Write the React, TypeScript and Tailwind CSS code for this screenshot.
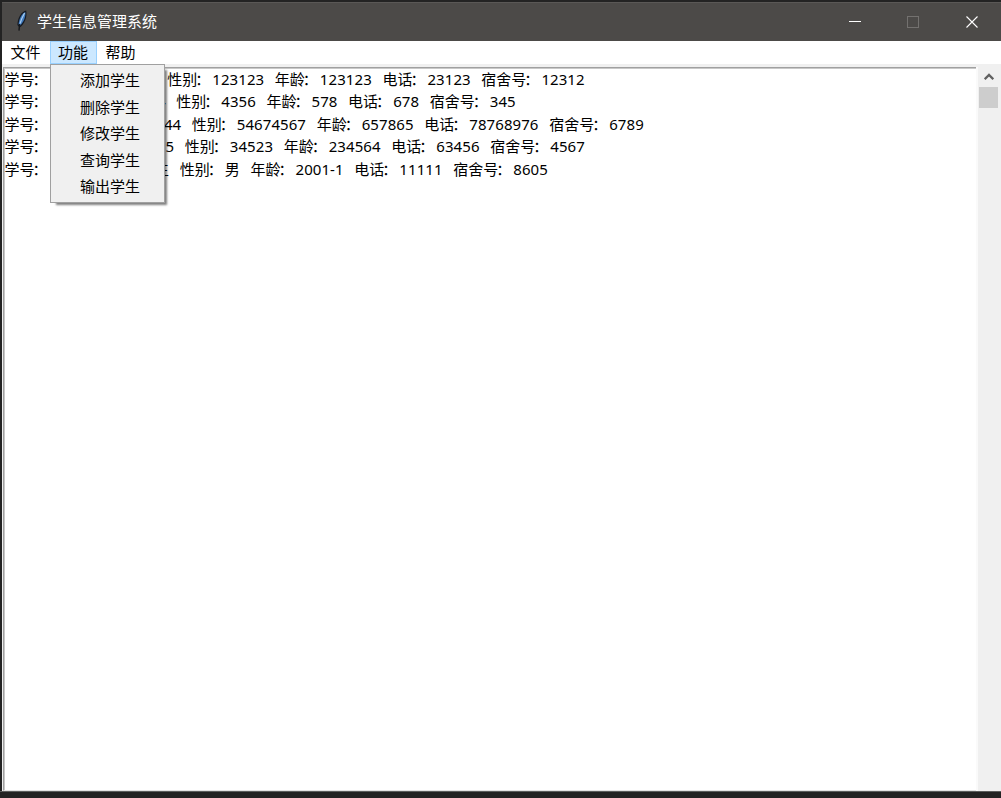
import { useState } from "react";

type Student = {
  name: string;
  nameWidth: number;
  gender: string;
  age: string;
  phone: string;
  dorm: string;
};

const students: Student[] = [
  { name: "", nameWidth: 96.5, gender: "123123", age: "123123", phone: "23123", dorm: "12312" },
  { name: "4", nameWidth: 105.5, gender: "4356", age: "578", phone: "678", dorm: "345" },
  { name: "44", nameWidth: 121, gender: "54674567", age: "657865", phone: "78768976", dorm: "6789" },
  { name: "5", nameWidth: 114, gender: "34523", age: "234564", phone: "63456", dorm: "4567" },
  { name: "生", nameWidth: 109, gender: "男", age: "2001-1", phone: "11111", dorm: "8605" },
];

const menus = ["文件", "功能", "帮助"];
const actions = ["添加学生", "删除学生", "修改学生", "查询学生", "输出学生"];

function Field({ label, value }: { label: string; value?: string }) {
  return (
    <span className="flex shrink-0">
      <span>{label}</span>
      <span className="mr-[2px] -ml-[2px]">：</span>
      {value && <span className="tracking-[0.08px]">{value}</span>}
    </span>
  );
}

function FeatherIcon() {
  return (
    <svg width="16" height="22" viewBox="0 0 16 22" className="shrink-0">
      <path d="M12.2 0.6 C8 1.2 3.6 7 3.4 15 L5.6 17.6 C10.5 14.5 13.4 7 12.2 0.6Z" fill="#151a22" />
      <path d="M11.3 2 C8 3.4 5 8.6 4.6 14.4 L6 15.6 C9.8 12 11.9 6.6 11.3 2Z" fill="#3f79bd" />
      <path d="M10.6 3 C9 6 7 9.6 6 13.6" fill="none" stroke="#a9cdef" strokeWidth="1.2" />
      <path d="M5.6 14 L5 20.6" fill="none" stroke="#17191c" strokeWidth="1.4" />
    </svg>
  );
}

function TitleBar() {
  return (
    <div className="flex h-[39px] shrink-0 items-center border-t border-[#5a5856] bg-[#4c4a48] text-white">
      <div className="flex items-center pb-[2px] pl-[12px]">
        <FeatherIcon />
        <span className="ml-[7px] leading-[20px]">学生信息管理系统</span>
      </div>
      <div className="ml-auto flex h-full items-center">
        <button className="flex h-full w-[58px] items-center justify-center">
          <svg width="12" height="12" viewBox="0 0 12 12">
            <path d="M0 5.5H12" stroke="#fff" />
          </svg>
        </button>
        <button className="flex h-full w-[58px] items-center justify-center">
          <svg width="12" height="12" viewBox="0 0 12 12">
            <rect x="0.5" y="0.5" width="11" height="11" fill="none" stroke="#73716f" />
          </svg>
        </button>
        <button className="flex h-full w-[59px] items-center justify-center">
          <svg width="12" height="12" viewBox="0 0 12 12">
            <path d="M0.5 0.5 11.5 11.5M11.5 0.5 0.5 11.5" stroke="#fff" strokeWidth="1.1" />
          </svg>
        </button>
      </div>
    </div>
  );
}

function ActionMenu() {
  return (
    <div className="absolute top-[23px] left-0 z-10 flex h-[139px] w-[115px] flex-col border border-[#a0a0a0] bg-[#f0f0f0] pt-[2.4px] shadow-[4px_4px_2px_-2px_rgba(0,0,0,0.5)]">
      {actions.map((action) => (
        <div key={action} className="h-[26.4px] shrink-0 pl-[29px] leading-[26.4px]">
          {action}
        </div>
      ))}
    </div>
  );
}

export default function App() {
  const [openMenu, setOpenMenu] = useState("功能");

  return (
    <div className="h-[798px] w-[1001px] overflow-hidden bg-[#232323] pt-[2px] pl-[2px] font-['Noto_Sans','Noto_Sans_CJK_SC',sans-serif] text-[15px] whitespace-nowrap text-black">
      <div className="flex h-[789px] flex-col bg-[#f0f0f0]">
        <TitleBar />
        <div className="flex h-[23px] shrink-0 bg-white">
          {menus.map((menu) => (
            <div key={menu} className="relative">
              <button
                onClick={() => setOpenMenu(openMenu === menu ? "" : menu)}
                className={
                  openMenu === menu
                    ? "block h-[23px] w-[47px] border border-[#99d1ff] bg-[#cce8ff] pr-px leading-[21px]"
                    : "block h-[23px] w-[48px] pr-px leading-[23px]"
                }
              >
                {menu}
              </button>
              {menu === "功能" && openMenu === menu && <ActionMenu />}
            </div>
          ))}
        </div>
        <div className="flex min-h-0 flex-1 pt-[3px]">
          <div className="ml-px w-[973px] border-t border-b border-l border-t-[#a0a0a0] border-b-[#e3e3e3] border-l-[#a0a0a0] bg-white">
            <div className="h-full border-t border-l border-[#c8c8c8]">
              {students.map((s, i) => (
                <div
                  key={i}
                  className={
                    i === 0
                      ? "-mt-[1.5px] -ml-[0.5px] flex h-[22.5px] gap-[10.6px] leading-[22.5px]"
                      : "-ml-[0.5px] flex h-[22.5px] gap-[10.6px] leading-[22.5px]"
                  }
                >
                  <Field label="学号" />
                  <span className="shrink-0 text-right" style={{ width: s.nameWidth }}>
                    {s.name}
                  </span>
                  <Field label="性别" value={s.gender} />
                  <Field label="年龄" value={s.age} />
                  <Field label="电话" value={s.phone} />
                  <Field label="宿舍号" value={s.dorm} />
                </div>
              ))}
            </div>
          </div>
          <div className="w-[3px] border-r border-[#f0f0f0] bg-[#fafafa]" />
          <div className="flex flex-1 flex-col">
            <div className="flex h-[20px] items-center pl-[5px]">
              <svg width="10" height="8" viewBox="0 0 10 8">
                <path d="M0.7 6.3 5 2 9.3 6.3" fill="none" stroke="#606060" strokeWidth="2.3" />
              </svg>
            </div>
            <div className="h-[21px] w-[19px] bg-[#cdcdcd]" />
          </div>
        </div>
      </div>
      <div className="-ml-[2px] h-px bg-[#5c5e5d]" />
    </div>
  );
}
